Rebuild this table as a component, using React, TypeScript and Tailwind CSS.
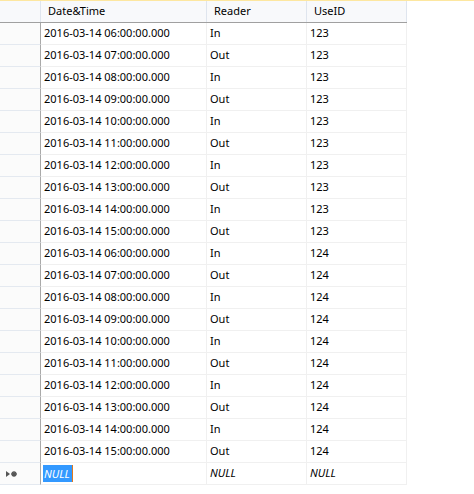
const rows: [string, string, string][] = [
  ["06", "In", "123"],
  ["07", "Out", "123"],
  ["08", "In", "123"],
  ["09", "Out", "123"],
  ["10", "In", "123"],
  ["11", "Out", "123"],
  ["12", "In", "123"],
  ["13", "Out", "123"],
  ["14", "In", "123"],
  ["15", "Out", "123"],
  ["06", "In", "124"],
  ["07", "Out", "124"],
  ["08", "In", "124"],
  ["09", "Out", "124"],
  ["10", "In", "124"],
  ["11", "Out", "124"],
  ["12", "In", "124"],
  ["13", "Out", "124"],
  ["14", "In", "124"],
  ["15", "Out", "124"],
];

// new-row marker: small arrow + asterisk
function NewRowMarker() {
  return (
    <svg width="14" height="8" viewBox="0 0 14 8" className="ml-[5px]">
      <path d="M1 1 L5 4 L1 7 Z" fill="#555" />
      <path d="M6 4 H12 M9 1 V7 M7 2 L11 6 M11 2 L7 6" stroke="#555" strokeWidth="1.3" />
    </svg>
  );
}

export default function App() {
  return (
    <div
      className="w-[474px] h-[494px] bg-white text-[11px] text-black overflow-hidden"
      style={{ fontFamily: '"Noto Sans", "Open Sans", sans-serif' }}
    >
      <div className="h-px bg-[#fde7a0]" />
      <div className="w-[407px]">
        {/* header */}
        <div className="flex h-[22px] bg-[#f8f9fb] border-b border-[#a0a0a0]">
          <div className="w-[41px] border-r border-[#dfe5ee]" />
          <div className="w-[166px] border-r border-[#dfe5ee] pl-[7px] flex items-center">Date&amp;Time</div>
          <div className="w-[100px] border-r border-[#dfe5ee] pl-[7px] flex items-center">Reader</div>
          <div className="w-[100px] border-r border-[#dfe5ee] pl-[7px] flex items-center">UseID</div>
        </div>
        {rows.map(([h, r, id], i) => (
          <div key={i} className="flex h-[22px]">
            <div className="w-[41px] bg-[#fbfbfb] border-r border-b border-r-[#a9a9a9] border-b-[#e4e9f0]" />
            <div className="w-[166px] border-r border-b border-[#f0f0f0] pl-[3px] flex items-center">
              2016-03-14 {h}:00:00.000
            </div>
            <div className="w-[100px] border-r border-b border-[#f0f0f0] pl-[3px] flex items-center">{r}</div>
            <div className="w-[100px] border-r border-b border-[#f0f0f0] pl-[3px] flex items-center">{id}</div>
          </div>
        ))}
        {/* new row */}
        <div className="flex h-[22px] italic">
          <div className="w-[41px] bg-[#fbfbfb] border-r border-b border-r-[#a9a9a9] border-b-[#e4e9f0] flex items-center">
            <NewRowMarker />
          </div>
          <div className="w-[166px] border-r border-b border-[#f0f0f0] pl-[2px] flex items-center">
            <span className="bg-[#3399ff] text-white pl-px pr-[2px] leading-[17px] border-r border-[#e07a1f]">NULL</span>
          </div>
          <div className="w-[100px] border-r border-b border-[#f0f0f0] pl-[3px] flex items-center">NULL</div>
          <div className="w-[100px] border-r border-b border-[#f0f0f0] pl-[3px] flex items-center">NULL</div>
        </div>
      </div>
    </div>
  );
}
